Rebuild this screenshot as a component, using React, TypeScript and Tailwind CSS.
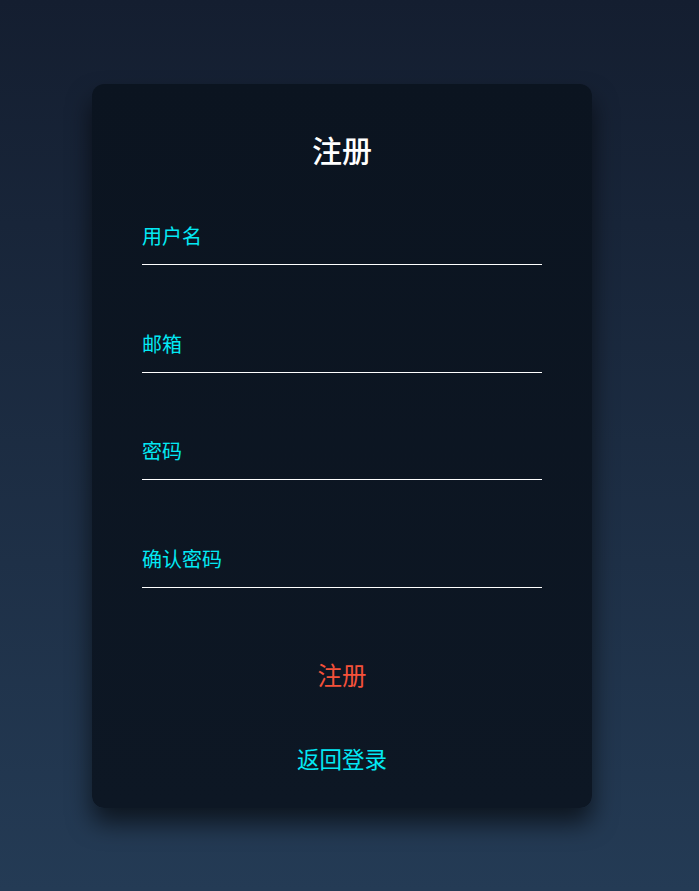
import React from 'react';

const FIELDS = ['用户名', '邮箱', '密码', '确认密码'];

export default function App() {
  return (
    <div
      className="min-h-screen w-full bg-gradient-to-b from-[#141e30] to-[#243b55] flex justify-center pt-[84px] pr-[15px]"
      style={{ fontFamily: '"Noto Sans CJK SC", "Noto Sans", sans-serif' }}
    >
      <div className="w-[500px] h-[724px] rounded-[12px] bg-gradient-to-b from-[#0b1420] to-[#0d1724] shadow-[0_15px_25px_rgba(0,0,0,0.6)] px-[50px] pt-[45px] flex flex-col">
        <h2 className="text-center text-white font-medium text-[30px] leading-[40px]">注册</h2>

        <div className="mt-[54px] flex flex-col gap-[65.5px]">
          {FIELDS.map(f => (
            <div key={f} className="h-[42px] border-b border-white flex items-end pb-[14px]">
              <span className="text-[#03e9f4] text-[20px] leading-[28px]">{f}</span>
            </div>
          ))}
        </div>

        <div className="mt-[71px] text-center text-[#f4513a] text-[24.5px] leading-[32px]">注册</div>
        <div className="mt-[52px] text-center text-[#03e9f4] text-[22.5px] leading-[30px]">返回登录</div>
      </div>
    </div>
  );
}
